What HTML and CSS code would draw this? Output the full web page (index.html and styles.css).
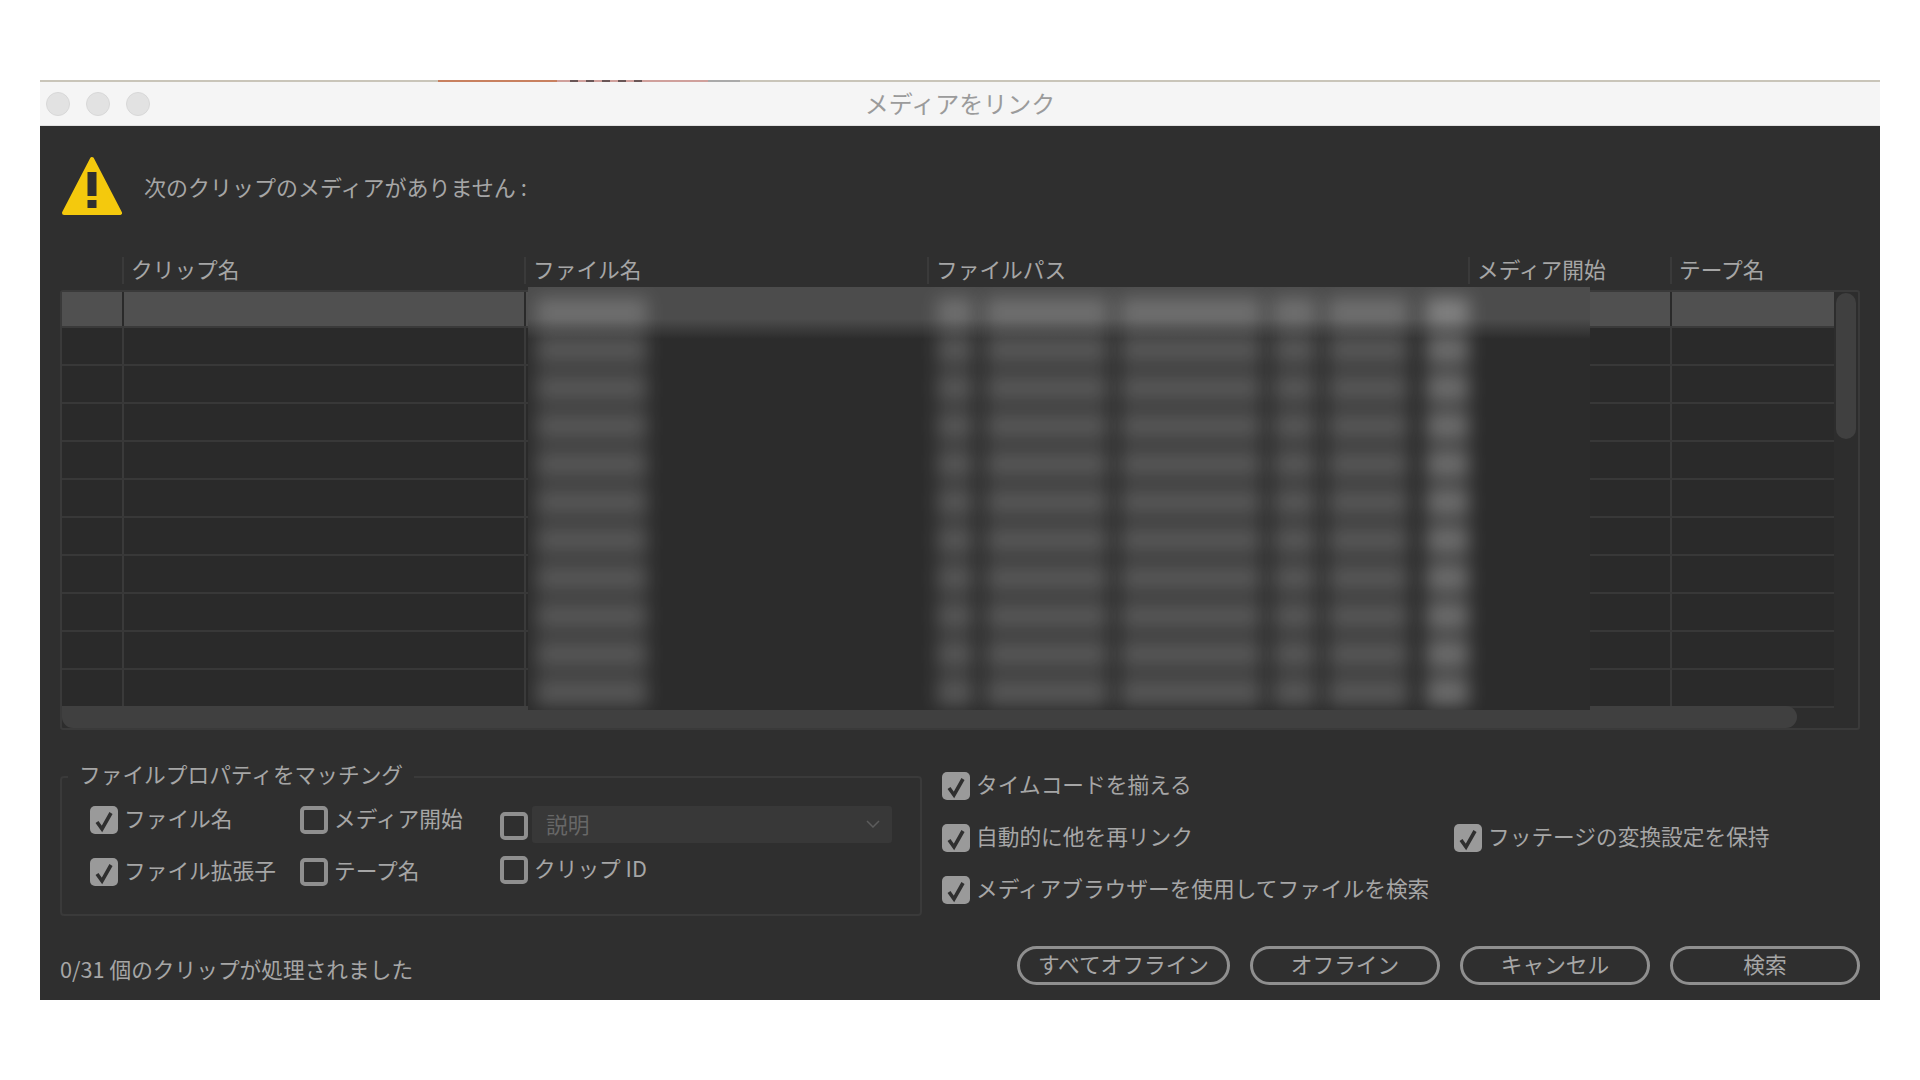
FILE: index.html
```html
<!DOCTYPE html>
<html lang="ja">
<head>
  <meta charset="UTF-8" />
  <meta name="viewport" content="width=device-width, initial-scale=1.0"/>
  <title>メディアをリンク</title>
  <link rel="stylesheet" href="styles.css">
</head>
<body>
  <div class="window">
    <div class="behind-strip">
      <span class="strip-beige"></span>
      <span class="strip-orange"></span>
      <span class="strip-pink"></span>
      <span class="strip-wavy"></span>
      <span class="strip-pink-end"></span>
      <span class="strip-grey"></span>
      <span class="strip-rest"></span>
    </div>

    <header class="titlebar">
      <div class="lights">
        <span class="light"></span>
        <span class="light"></span>
        <span class="light"></span>
      </div>
      <div class="window-title">メディアをリンク</div>
    </header>

    <main class="dialog">
      <div class="alert">
        <svg class="alert-icon" viewBox="0 0 60 60" width="60" height="60">
          <polygon points="30,3 58,57 2,57" fill="#f4c90d" stroke="#f4c90d" stroke-width="4" stroke-linejoin="round"/>
          <rect x="25.5" y="16" width="9" height="24" fill="#2f2f2f"/>
          <rect x="25.5" y="44" width="9" height="8" fill="#2f2f2f"/>
        </svg>
        <p class="alert-text">次のクリップのメディアがありません :</p>
      </div>

      <div class="table-head">
        <div class="head-cell"></div>
        <div class="head-cell">クリップ名</div>
        <div class="head-cell">ファイル名</div>
        <div class="head-cell">ファイルパス</div>
        <div class="head-cell">メディア開始</div>
        <div class="head-cell">テープ名</div>
      </div>

      <div class="table">
        <div class="row selected"><i></i><i></i><i></i><i></i><i></i><i></i></div>
        <div class="row"><i></i><i></i><i></i><i></i><i></i><i></i></div>
        <div class="row"><i></i><i></i><i></i><i></i><i></i><i></i></div>
        <div class="row"><i></i><i></i><i></i><i></i><i></i><i></i></div>
        <div class="row"><i></i><i></i><i></i><i></i><i></i><i></i></div>
        <div class="row"><i></i><i></i><i></i><i></i><i></i><i></i></div>
        <div class="row"><i></i><i></i><i></i><i></i><i></i><i></i></div>
        <div class="row"><i></i><i></i><i></i><i></i><i></i><i></i></div>
        <div class="row"><i></i><i></i><i></i><i></i><i></i><i></i></div>
        <div class="row"><i></i><i></i><i></i><i></i><i></i><i></i></div>
        <div class="row"><i></i><i></i><i></i><i></i><i></i><i></i></div>

        <div class="scroll-v"></div>
        <div class="scroll-h"></div>

        <!-- blurred out file names and paths -->
        <div class="redacted">
          <div class="smear s1"></div>
          <div class="smear s2"></div>
          <div class="smear s3"></div>
          <div class="smear s4"></div>
          <div class="smear s5"></div>
          <div class="smear s6"></div>
          <div class="smear s7"></div>
        </div>
      </div>

      <div class="options">
        <fieldset class="match-group">
          <legend>ファイルプロパティをマッチング</legend>
          <div class="match-grid">
            <label class="check">
              <span class="box on"><svg viewBox="0 0 27 28"><path d="M6.5 16 L11.5 23 L20.5 7"/></svg></span>ファイル名
            </label>
            <label class="check">
              <span class="box"></span>メディア開始
            </label>
            <div class="check desc-row">
              <span class="box"></span>
              <div class="select">説明
                <svg class="chevron" viewBox="0 0 14 8" width="14" height="8"><path d="M1 1 L7 7 L13 1"/></svg>
              </div>
            </div>
            <label class="check">
              <span class="box on"><svg viewBox="0 0 27 28"><path d="M6.5 16 L11.5 23 L20.5 7"/></svg></span>ファイル拡張子
            </label>
            <label class="check">
              <span class="box"></span>テープ名
            </label>
            <label class="check clip-id">
              <span class="box"></span>クリップ ID
            </label>
          </div>
        </fieldset>

        <div class="side-options">
          <label class="check">
            <span class="box on"><svg viewBox="0 0 27 28"><path d="M6.5 16 L11.5 23 L20.5 7"/></svg></span>タイムコードを揃える
          </label>
          <span></span>
          <label class="check">
            <span class="box on"><svg viewBox="0 0 27 28"><path d="M6.5 16 L11.5 23 L20.5 7"/></svg></span>自動的に他を再リンク
          </label>
          <label class="check">
            <span class="box on"><svg viewBox="0 0 27 28"><path d="M6.5 16 L11.5 23 L20.5 7"/></svg></span>フッテージの変換設定を保持
          </label>
          <label class="check">
            <span class="box on"><svg viewBox="0 0 27 28"><path d="M6.5 16 L11.5 23 L20.5 7"/></svg></span>メディアブラウザーを使用してファイルを検索
          </label>
        </div>
      </div>

      <footer class="footer">
        <div class="status">0/31 個のクリップが処理されました</div>
        <div class="buttons">
          <button class="btn btn-wide">すべてオフライン</button>
          <button class="btn">オフライン</button>
          <button class="btn">キャンセル</button>
          <button class="btn">検索</button>
        </div>
      </footer>
    </main>
  </div>
</body>
</html>
```

FILE: styles.css
```css
:root {
  --panel: #2f2f2f;
  --text: #a6a6a6;
  --line: #3a3a3a;
  --well: #2a2a2a;
  --thumb: #404040;
}

* {
  margin: 0;
  padding: 0;
  box-sizing: border-box;
  font-family: "Noto Sans CJK JP", "Noto Sans", sans-serif;
}

body {
  background: #fff;
  min-height: 100vh;
  padding: 80px 40px 0;
}

.behind-strip {
  display: flex;
  height: 2px;
}

.strip-beige { width: 398px; background: #c9c5b9; }
.strip-orange { width: 119px; background: #c8805f; }
.strip-pink { width: 13px; background: #d0a09c; }
.strip-wavy {
  width: 80px;
  background: repeating-linear-gradient(90deg, #6a5656 0 8px, #d0a09c 8px 16px);
}
.strip-pink-end { width: 58px; background: #d0a09c; }
.strip-grey { width: 32px; background: #aaa; }
.strip-rest { flex: 1; background: #c9c5b9; }

.titlebar {
  display: grid;
  grid-template-columns: 1fr auto 1fr;
  align-items: center;
  height: 44px;
  padding: 0 6px;
  background: #f5f5f5;
  border-bottom: 1px solid #e2e2e2;
}

.lights {
  display: flex;
  gap: 16px;
}

.light {
  width: 24px;
  height: 24px;
  border-radius: 50%;
  background: #e2e2e2;
  border: 1px solid #d8d8d8;
}

.window-title {
  padding-bottom: 2px;
  font-size: 24px;
  line-height: 30px;
  color: #9b9b9b;
}

.dialog {
  height: 874px;
  padding: 30px 20px 0;
  background: var(--panel);
  color: var(--text);
  font-size: 21.7px;
}

.alert {
  display: flex;
  align-items: center;
  gap: 22px;
  height: 60px;
  padding-left: 2px;
}

.alert-icon {
  flex: none;
}

.alert-text {
  font-size: 22px;
  line-height: 30px;
}

.table-head {
  display: grid;
  grid-template-columns: 62px 402px 403px 541px 202px 1fr;
  height: 27px;
  margin-top: 41px;
}

.head-cell {
  padding-left: 7px;
  line-height: 23px;
  border-left: 2px solid var(--line);
  white-space: nowrap;
}

.head-cell:first-child {
  border-left: none;
}

.table {
  position: relative;
  height: 440px;
  margin-top: 6px;
  background: #2d2d2d;
  border: 2px solid var(--line);
  border-radius: 3px;
}

.row {
  display: grid;
  grid-template-columns: 60px 402px 403px 541px 202px 164px;
  width: 1772px;
  height: 38px;
  background: var(--well);
  border-bottom: 2px solid #383838;
}

.row:last-of-type {
  border-bottom: none;
}

.row.selected {
  height: 36px;
  background: #505050;
  border-bottom-color: #3a3a3a;
}

.row i {
  border-left: 2px solid #3a3a3a;
}

.row i:first-child {
  border-left: none;
}

.row.selected i {
  border-left-color: #2a2a2a;
}

.row.selected i:first-child {
  border-left: none;
}

.scroll-v {
  position: absolute;
  top: 1px;
  right: 2px;
  width: 20px;
  height: 146px;
  border-radius: 10px;
  background: var(--thumb);
}

.scroll-h {
  position: absolute;
  left: 0;
  bottom: 0;
  width: 1735px;
  height: 22px;
  border-radius: 0 11px 11px 11px;
  background: var(--thumb);
}

.redacted {
  position: absolute;
  top: -5px;
  left: 466px;
  display: flex;
  width: 1062px;
  height: 423px;
  padding: 11px 0 4px 8px;
  overflow: hidden;
  background: linear-gradient(#4c4c4c 0, #4c4c4c 32px, #2c2c2c 52px);
}

.smear {
  flex: none;
  background: repeating-linear-gradient(to bottom, rgba(255, 255, 255, 0.2) 0 28px, rgba(255, 255, 255, 0.03) 28px 38px);
  filter: blur(9px);
}

.s1 { width: 111px; }
.s2 { width: 36px; margin-left: 290px; }
.s3 { width: 122px; margin-left: 13px; }
.s4 { width: 141px; margin-left: 12px; }
.s5 { width: 43px; margin-left: 12px; }
.s6 { width: 80px; margin-left: 12px; }
.s7 {
  width: 43px;
  margin-left: 18px;
  background: repeating-linear-gradient(to bottom, rgba(255, 255, 255, 0.3) 0 28px, rgba(255, 255, 255, 0.05) 28px 38px);
}

.options {
  display: flex;
  align-items: flex-start;
  margin-top: 32px;
}

.match-group {
  flex: none;
  width: 862px;
  height: 154px;
  padding-top: 14px;
  border: 2px solid var(--line);
  border-radius: 4px;
}

.match-group legend {
  margin-left: 6px;
  padding: 0 11px 6px;
  line-height: 24px;
  color: var(--text);
}

.match-grid {
  display: grid;
  grid-template-columns: 210px 200px 1fr;
  grid-auto-rows: 28px;
  row-gap: 24px;
  padding-left: 28px;
}

.check {
  display: flex;
  align-items: flex-start;
  gap: 6px;
  height: 28px;
  line-height: 24px;
  white-space: nowrap;
}

.box {
  flex: none;
  width: 28px;
  height: 28px;
  border: 4px solid #8f8f8f;
  border-radius: 5px;
}

.box.on {
  border: none;
  background: #9a9a9a;
}

.box svg {
  display: block;
  width: 100%;
  height: 100%;
  fill: none;
  stroke: #2f2f2f;
  stroke-width: 3.6;
}

.desc-row {
  gap: 4px;
  margin-top: 6px;
}

.clip-id {
  margin-top: -2px;
}

.select {
  display: flex;
  align-items: center;
  justify-content: space-between;
  width: 360px;
  height: 37px;
  margin-top: -6px;
  padding: 0 12px 2px 14px;
  background: #383838;
  border-radius: 3px;
  color: #676767;
}

.chevron {
  fill: none;
  stroke: #5c5c5c;
  stroke-width: 1.5;
}

.side-options {
  display: grid;
  grid-template-columns: 512px 1fr;
  grid-auto-rows: 28px;
  row-gap: 24px;
  flex: 1;
  margin: 10px 0 0 20px;
}

.footer {
  display: flex;
  align-items: center;
  justify-content: space-between;
  margin-top: 30px;
}

.status {
  margin-top: 5px;
}

.buttons {
  display: flex;
  gap: 20px;
}

.btn {
  width: 190px;
  height: 39px;
  padding-bottom: 4px;
  background: transparent;
  border: 3px solid #8f8f8f;
  border-radius: 20px;
  color: var(--text);
  font-size: 21.7px;
  line-height: 30px;
}

.btn-wide {
  width: 213px;
}
```
